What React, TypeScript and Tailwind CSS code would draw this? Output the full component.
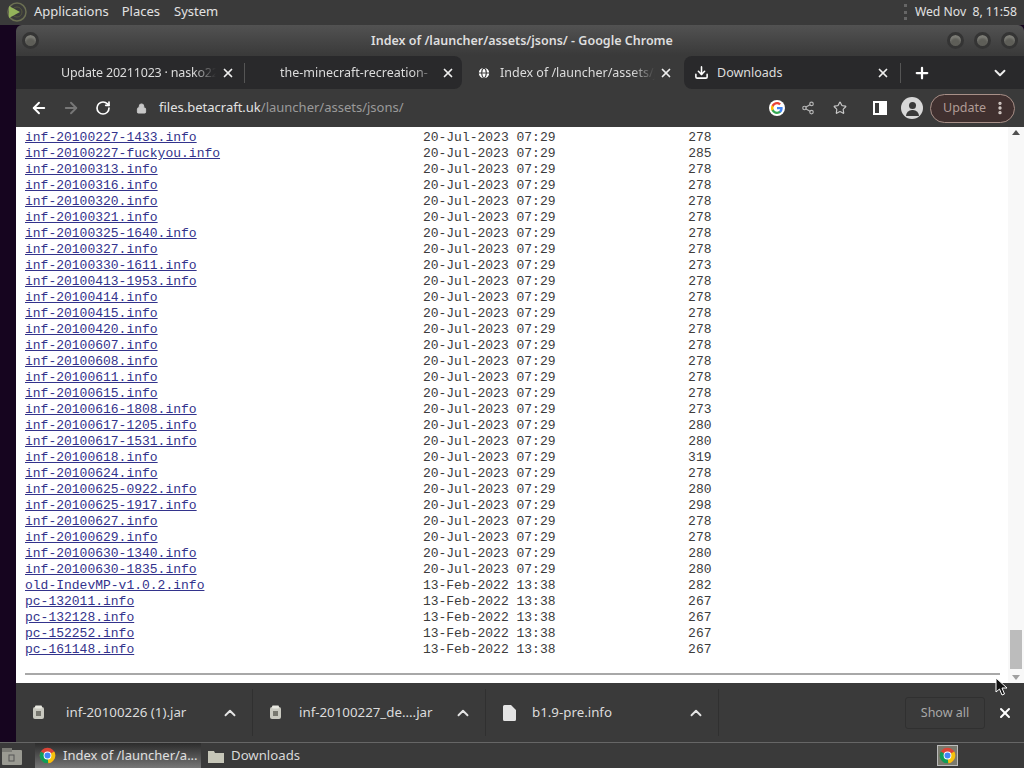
import React from 'react'
import { ArrowLeft, ArrowRight, RotateCw, Lock, Share2, Star, ChevronUp, ChevronDown, Plus, X, Download, Globe, EllipsisVertical } from 'lucide-react'

const FONT = "font-['Noto_Sans',sans-serif]"

const rows: [string, string, string][] = [
  ['inf-20100227-1433.info', '20-Jul-2023 07:29', '278'],
  ['inf-20100227-fuckyou.info', '20-Jul-2023 07:29', '285'],
  ['inf-20100313.info', '20-Jul-2023 07:29', '278'],
  ['inf-20100316.info', '20-Jul-2023 07:29', '278'],
  ['inf-20100320.info', '20-Jul-2023 07:29', '278'],
  ['inf-20100321.info', '20-Jul-2023 07:29', '278'],
  ['inf-20100325-1640.info', '20-Jul-2023 07:29', '278'],
  ['inf-20100327.info', '20-Jul-2023 07:29', '278'],
  ['inf-20100330-1611.info', '20-Jul-2023 07:29', '273'],
  ['inf-20100413-1953.info', '20-Jul-2023 07:29', '278'],
  ['inf-20100414.info', '20-Jul-2023 07:29', '278'],
  ['inf-20100415.info', '20-Jul-2023 07:29', '278'],
  ['inf-20100420.info', '20-Jul-2023 07:29', '278'],
  ['inf-20100607.info', '20-Jul-2023 07:29', '278'],
  ['inf-20100608.info', '20-Jul-2023 07:29', '278'],
  ['inf-20100611.info', '20-Jul-2023 07:29', '278'],
  ['inf-20100615.info', '20-Jul-2023 07:29', '278'],
  ['inf-20100616-1808.info', '20-Jul-2023 07:29', '273'],
  ['inf-20100617-1205.info', '20-Jul-2023 07:29', '280'],
  ['inf-20100617-1531.info', '20-Jul-2023 07:29', '280'],
  ['inf-20100618.info', '20-Jul-2023 07:29', '319'],
  ['inf-20100624.info', '20-Jul-2023 07:29', '278'],
  ['inf-20100625-0922.info', '20-Jul-2023 07:29', '280'],
  ['inf-20100625-1917.info', '20-Jul-2023 07:29', '298'],
  ['inf-20100627.info', '20-Jul-2023 07:29', '278'],
  ['inf-20100629.info', '20-Jul-2023 07:29', '278'],
  ['inf-20100630-1340.info', '20-Jul-2023 07:29', '280'],
  ['inf-20100630-1835.info', '20-Jul-2023 07:29', '280'],
  ['old-IndevMP-v1.0.2.info', '13-Feb-2022 13:38', '282'],
  ['pc-132011.info', '13-Feb-2022 13:38', '267'],
  ['pc-132128.info', '13-Feb-2022 13:38', '267'],
  ['pc-152252.info', '13-Feb-2022 13:38', '267'],
  ['pc-161148.info', '13-Feb-2022 13:38', '267'],
]

function ChromeLogo({ size }: { size: number }) {
  return (
    <svg width={size} height={size} viewBox="0 0 48 48" className="shrink-0">
      <circle cx="24" cy="24" r="22" fill="#db4437" />
      <path d="M24 24 L43 13 A22 22 0 0 1 26 46 Z" fill="#f4c20d" />
      <path d="M24 24 L26 46 A22 22 0 0 1 5 13 Z" fill="#0f9d58" />
      <circle cx="24" cy="24" r="11" fill="#fff" />
      <circle cx="24" cy="24" r="8.500" fill="#4285f4" />
    </svg>
  )
}

function GoogleLogo() {
  return (
    <svg width="16" height="16" viewBox="0 0 48 48">
      <circle cx="24" cy="24" r="24" fill="#fff" />
      <path d="M41 24.500c0-1.300-.1-2.500-.4-3.700H24v7h9.600c-.4 2.200-1.700 4.100-3.600 5.400v4.500h5.800C39.200 34.500 41 29.900 41 24.500z" fill="#4285f4" />
      <path d="M24 42c4.900 0 8.900-1.600 11.800-4.300L30 33.200c-1.600 1.100-3.600 1.700-6 1.700-4.600 0-8.600-3.100-10-7.300H8v4.600C11 38 17 42 24 42z" fill="#34a853" />
      <path d="M14 27.600c-.4-1.100-.6-2.300-.6-3.600s.2-2.500.6-3.600v-4.600H8C6.700 18.300 6 21.100 6 24s.7 5.700 2 8.200l6-4.600z" fill="#fbbc05" />
      <path d="M24 13.100c2.600 0 5 .9 6.800 2.700l5.100-5.100C32.900 7.900 28.900 6 24 6 17 6 11 10 8 15.800l6 4.600c1.400-4.200 5.400-7.300 10-7.300z" fill="#ea4335" />
    </svg>
  )
}

function WinButton() {
  return <div className="w-[17px] h-[17px] rounded-full bg-[#5e5e58] border-[3px] border-[#343434] shadow-[inset_0_3px_2px_#7c7c76]" />
}

// long tab titles fade out at the right instead of ending in an ellipsis
function FadeTitle({ children, width }: { children: React.ReactNode; width: string }) {
  return (
    <div className={`whitespace-nowrap pt-[1px] [mask-image:linear-gradient(to_right,#000_85%,transparent)] ${width}`}>
      {children}
    </div>
  )
}

function DownloadItem({ icon, name, width, iconWidth }: { icon: React.ReactNode; name: string; width: string; iconWidth: string }) {
  return (
    <div className={`flex items-center h-[47px] border-r border-[#303030] ${width}`}>
      <div className={`flex justify-center ${iconWidth}`}>{icon}</div>
      <span className="flex-1 text-[13.3px] text-[#dcdcdc] whitespace-nowrap">{name}</span>
      <ChevronUp size={18} strokeWidth={2.5} className="text-[#e4e4e4] mr-[13px]" />
    </div>
  )
}

function JarIcon() {
  return (
    <svg width="13" height="15" viewBox="0 0 13 15">
      <rect x="1" y="2" width="11" height="12" rx="2" fill="#c9c9c0" />
      <rect x="3" y="0.500" width="7" height="3" rx="1" fill="#e8e8e0" />
      <rect x="4" y="6" width="5" height="5" fill="#77776f" />
    </svg>
  )
}

function PageIcon() {
  return (
    <svg width="13" height="16" viewBox="0 0 13 16">
      <path d="M0 1.500 A1.500 1.500 0 0 1 1.500 0 H8 L13 5 V14.500 A1.500 1.500 0 0 1 11.500 16 H1.500 A1.500 1.500 0 0 1 0 14.500 Z" fill="#e4e4e4" />
    </svg>
  )
}

export default function App() {
  return (
    <div className={`w-[1024px] h-[768px] overflow-hidden flex flex-col relative bg-[#16051f] ${FONT}`}>
      {/* desktop top panel */}
      <div className="h-[25px] shrink-0 bg-[#3a3a3a] flex items-center pb-[1px] text-[13px] text-[#e2e2e2]">
        <svg width="24" height="24" viewBox="0 0 24 24" className="ml-[3px]">
          <circle cx="14" cy="12" r="9" fill="none" stroke="#6b6f52" strokeWidth="1.500" />
          <circle cx="14" cy="12" r="5" fill="none" stroke="#55583f" strokeWidth="1" />
          <path d="M6 6 L17 12 L6 18 Z" fill="#94b35a" />
        </svg>
        <span className="ml-[7px]">Applications</span>
        <span className="ml-[13px]">Places</span>
        <span className="ml-[14px]">System</span>
        <div className="ml-auto flex items-center pr-[7px]">
          <div className="w-[3px] h-[16px] mr-[8px] border-l-[3px] border-dotted border-[#666]" />
          <span className="whitespace-pre text-[12.2px]">Wed Nov  8, 11:58</span>
        </div>
      </div>

      <div className="flex-1 min-h-0 flex flex-col ml-[16px]">
        {/* title bar */}
        <div className="h-[30px] shrink-0 bg-gradient-to-b from-[#525252] to-[#3a3a3a] rounded-t-[6px] flex items-center px-[6px]">
          <WinButton />
          <span className="flex-1 text-center text-[12.5px] font-semibold text-[#dedede] pl-[58px] pt-[3px]">Index of /launcher/assets/jsons/ - Google Chrome</span>
          <div className="flex gap-[10px]">
            <WinButton />
            <WinButton />
            <WinButton />
          </div>
        </div>

        {/* tab strip */}
        <div className="h-[34px] shrink-0 bg-[#3a3a3a] flex items-stretch pt-[1px] text-[12.5px] text-[#dcdcdc]">
          <div className="w-[446px] bg-[#29292b] rounded-r-[8px] flex items-center">
            <div className="w-[228px] flex items-center h-full pl-[45px]">
              <FadeTitle width="w-[155px] tracking-[-0.2px]">Update 20211023 · nasko22</FadeTitle>
              <X size={14} strokeWidth={3} className="ml-[5px] text-[#eee]" />
            </div>
            <div className="w-px h-[20px] bg-[#555]" />
            <div className="flex-1 flex items-center h-full pl-[35px]">
              <FadeTitle width="w-[156px]">the-minecraft-recreation-</FadeTitle>
              <X size={14} strokeWidth={3} className="ml-[5px] text-[#eee]" />
            </div>
          </div>
          <div className="w-[222px] flex items-center pl-[15px]">
            <Globe size={14} fill="#fff" className="text-[#3a3a3a]" />
            <FadeTitle width="w-[155px] ml-[9px]">Index of /launcher/assets/j</FadeTitle>
            <X size={14} strokeWidth={3} className="ml-[4px] text-[#eee]" />
          </div>
          <div className="flex-1 bg-[#29292b] rounded-l-[8px] flex items-center">
            <div className="w-[216px] flex items-center h-full pl-[10px] pr-[10px]">
              <Download size={15} strokeWidth={2.5} className="text-white" />
              <span className="ml-[8px] flex-1 pt-[1px]">Downloads</span>
              <X size={14} strokeWidth={3} className="text-[#eee]" />
            </div>
            <div className="w-px h-[20px] bg-[#555]" />
            <Plus size={18} strokeWidth={3} className="text-white ml-[12px]" />
            <ChevronDown size={18} strokeWidth={2.5} className="text-[#eee] ml-auto mr-[15px]" />
          </div>
        </div>

        {/* toolbar */}
        <div className="h-[38px] shrink-0 bg-[#3a3a3a] flex items-center text-[13px]">
          <ArrowLeft size={18} strokeWidth={2.5} className="ml-[14px] text-white" />
          <ArrowRight size={18} strokeWidth={2.5} className="ml-[14px] text-[#777]" />
          <RotateCw size={16} strokeWidth={2.5} className="ml-[15px] text-white" />
          <Lock size={11} fill="#c8c8c8" className="ml-[25px] text-[#c8c8c8]" />
          <span className="ml-[12px] text-[#e2e2e2]">files.betacraft.uk<span className="text-[#9a9a9a]">/launcher/assets/jsons/</span></span>
          <div className="ml-auto flex items-center pr-[9px]">
            <GoogleLogo />
            <Share2 size={14} className="ml-[16px] text-[#b5b5b5]" />
            <Star size={14} strokeWidth={2} className="ml-[18px] text-[#c8c8c8]" />
            <div className="ml-[26px] w-[14px] h-[14px] border-2 border-white flex justify-end">
              <div className="w-[6px] h-full bg-white" />
            </div>
            <div className="ml-[14px] w-[22px] h-[22px] rounded-full bg-[#d8d8d8] overflow-hidden flex flex-col items-center">
              <div className="w-[7px] h-[7px] rounded-full bg-[#3a3a3a] mt-[5px]" />
              <div className="w-[13px] h-[6px] rounded-t-full bg-[#3a3a3a] mt-[1px]" />
            </div>
            <div className="ml-[7px] w-[85px] h-[29px] rounded-full border border-[#a89088] bg-[#40302f] flex items-center pl-[12px] text-[12.5px] text-[#b09c96]">
              Update
              <EllipsisVertical size={16} strokeWidth={3} className="ml-[6px] text-[#d8d0cc]" />
            </div>
          </div>
        </div>

        {/* page */}
        <div className="h-[556px] shrink-0 bg-white flex overflow-hidden">
          <div className="flex-1 min-w-0 pt-[3px] pl-[9px] pr-[8px]">
            <pre className="font-['Liberation_Mono',monospace] text-[13px] leading-[16px] text-[#3c3c3c] m-0">
              {rows.map(([name, date, size]) => (
                <div key={name} className="h-[16px]">
                  <a className="text-[#33338c] underline">{name}</a>
                  {' '.repeat(51 - name.length)}{date}{size.padStart(20, ' ')}
                </div>
              ))}
            </pre>
            <div className="mt-[15px] h-[2px] bg-[#a8a8a8]" />
          </div>
          <div className="w-[16px] shrink-0 bg-[#f8f8f8] flex flex-col items-center pt-[3px] pb-[3px]">
            <div className="w-0 h-0 border-x-[4px] border-x-transparent border-b-[5px] border-b-[#505050]" />
            <div className="w-[12px] h-[39px] bg-[#bcbcbc] mt-auto mb-[6px]" />
            <div className="w-0 h-0 border-x-[4px] border-x-transparent border-t-[5px] border-t-[#a0a0a0]" />
          </div>
        </div>

        {/* downloads shelf */}
        <div className="flex-1 min-h-0 bg-[#3a3a3a] flex items-center">
          <DownloadItem icon={<JarIcon />} name="inf-20100226 (1).jar" width="w-[237px]" iconWidth="w-[50px] pr-[6px]" />
          <DownloadItem icon={<JarIcon />} name="inf-20100227_de....jar" width="w-[233px]" iconWidth="w-[46px] pr-[2px]" />
          <DownloadItem icon={<PageIcon />} name="b1.9-pre.info" width="w-[233px]" iconWidth="w-[46px]" />
          <div className="ml-auto flex items-center pr-[11px]">
            <div className="w-[80px] h-[32px] border border-[#303030] rounded-[3px] flex items-center justify-center pt-[1px] text-[12.5px] text-[#a8a8a8]">Show all</div>
            <X size={16} strokeWidth={3} className="ml-[12px] text-white" />
          </div>
        </div>
      </div>

      {/* desktop bottom panel */}
      <div className="h-[26px] shrink-0 bg-[#3a3a3a] border-t border-[#666] flex items-center text-[13.2px] text-[#d8d8d8]">
        <svg width="22" height="20" viewBox="0 0 22 20" className="ml-[1px]">
          <rect x="1" y="4" width="20" height="15" rx="1" fill="#9a9a92" />
          <rect x="1" y="2" width="10" height="4" fill="#7c7c76" />
          <rect x="8" y="9" width="5" height="6" fill="none" stroke="#555" />
        </svg>
        <div className="ml-[12px] w-[166px] h-[25px] bg-gradient-to-b from-[#2c2c2c] to-[#777] flex items-center pl-[4px]">
          <ChromeLogo size={17} />
          <span className="ml-[7px] whitespace-nowrap text-[13px] text-[#e0e0e0]">Index of /launcher/a...</span>
        </div>
        <svg width="16" height="14" viewBox="0 0 16 14" className="ml-[7px]">
          <path d="M0 2 h6 l1 2 h9 v10 h-16 z" fill="#c6c6b8" />
        </svg>
        <span className="ml-[7px]">Downloads</span>
        <div className="ml-auto mr-[66px] w-[21px] h-[21px] border border-[#bbb] bg-[#7a7a6e] flex items-center justify-center">
          <ChromeLogo size={17} />
        </div>
      </div>

      {/* mouse pointer */}
      <svg width="14" height="20" viewBox="0 0 14 20" className="absolute left-[995px] top-[677px]">
        <path d="M1 1 L1 15 L4.500 12 L7 18 L9.500 17 L7 11 L12 11 Z" fill="#111" stroke="#fff" strokeWidth="1" />
      </svg>
    </div>
  )
}
